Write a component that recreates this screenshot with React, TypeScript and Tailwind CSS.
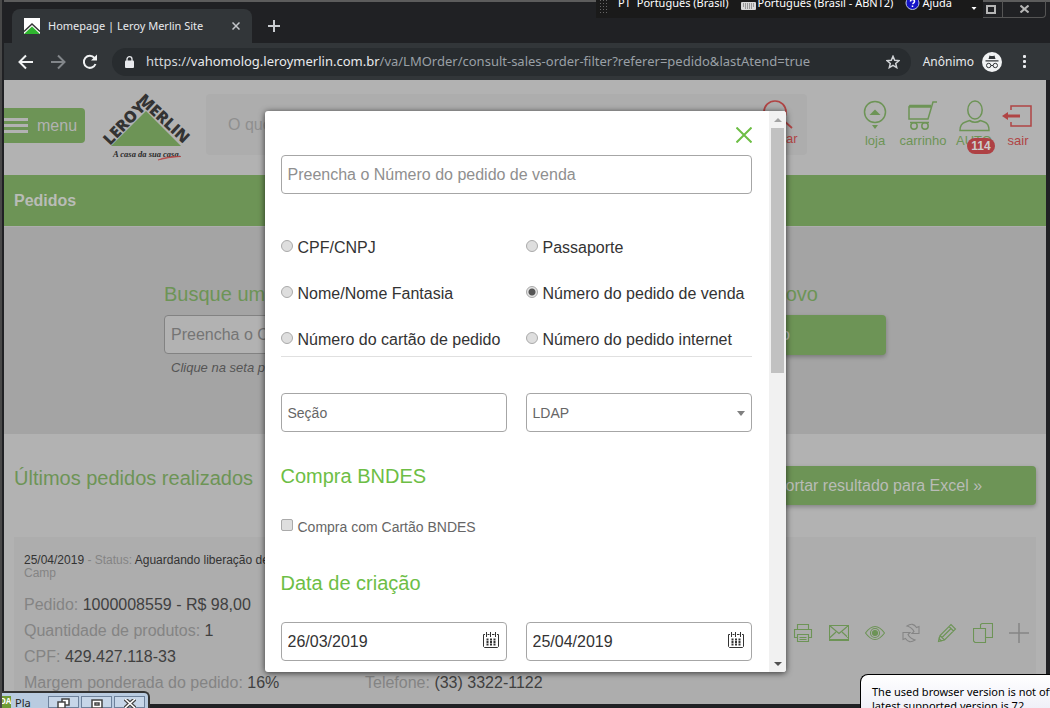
import { ReactNode, useState } from "react";

const PAGE_FONT = "font-['Liberation_Sans',Arial,sans-serif]";
const UI_FONT = "font-['Noto_Sans',sans-serif]";
const FIELD =
  "w-full rounded border border-[#a6a6a6] bg-white pl-1.5 text-[#333] placeholder:text-[#8f8f8f] outline-none";

function LanguageBar() {
  return (
    <div className="absolute -top-0.5 right-[67px] flex h-[18px] w-[387px] items-start overflow-hidden bg-[#1a1a1a] text-[11px] text-white">
      <svg width="12" height="14" className="ml-1 shrink-0" fill="#666">
        {[0, 3, 6, 9, 12].map((y) =>
          [0, 3, 6].map((x) => <rect key={`${x}-${y}`} x={x} y={y} width="1" height="1" />)
        )}
      </svg>
      <div className="flex h-1.5 flex-1 items-center whitespace-nowrap">
        <span className="ml-1.5">PT</span>
        <span className="ml-1.5">Português (Brasil)</span>
        <svg width="15" height="16" viewBox="0 0 15 16" className="mr-0.5 ml-3 shrink-0">
          <rect x="0" y="7" width="15" height="8" rx="1" fill="#d8d8d8" />
          <path d="M2 9h11M2 11h11M4 13h7" stroke="#555" strokeDasharray="1 1" />
        </svg>
        <span>Português (Brasil - ABNT2)</span>
        <svg width="15" height="16" viewBox="0 0 15 16" className="mr-0.5 ml-3 shrink-0">
          <circle cx="7.500" cy="8" r="6.500" fill="#1414c8" stroke="#b8c4e8" />
          <path d="M5.500 6.500q0-2 2-2t2 2q0 1-2 2.300M7.500 10.500v1.500" stroke="#fff" strokeWidth="1.500" fill="none" />
        </svg>
        <span>Ajuda</span>
      </div>
      <svg width="7" height="4" className="mt-[7px] mr-[5px] shrink-0">
        <path d="M0.500 0h5L3 3z" fill="#fff" />
      </svg>
    </div>
  );
}

function BrowserChrome() {
  return (
    <header className={`${UI_FONT} relative shrink-0 border-t-2 border-[#5c5c5c] text-[#e8eaed]`}>
      <div className="flex h-[41px] items-end pl-2">
        <div className="flex h-[34px] w-[240px] items-center rounded-t-lg bg-[#323639] pr-3 pl-3">
          <svg width="16" height="16" viewBox="0 0 16 16">
            <path d="M0 0h16v16H0z" fill="#fff" />
            <path d="M0 16l8-7.500 8 7.500z" fill="#2fb52f" />
            <path d="M0 13.500l8-7.500 8 7.500" stroke="#333" strokeWidth="1.400" fill="none" />
          </svg>
          <span className="ml-2 flex-1 text-[11px] whitespace-nowrap">Homepage | Leroy Merlin Site</span>
          <button aria-label="Fechar guia" className="p-0">
            <svg width="8" height="8" viewBox="0 0 8 8" stroke="#c3c6ca" strokeWidth="1.500">
              <path d="M0.500 0.500l7 7M7.500 0.500l-7 7" />
            </svg>
          </button>
        </div>
        <button aria-label="Nova guia" className="mb-[11px] ml-4">
          <svg width="12" height="12" stroke="#c9ccd0" strokeWidth="2">
            <path d="M6 0v12M0 6h12" />
          </svg>
        </button>
      </div>
      <div className="absolute -top-px right-1 flex h-[17px] rounded-b border border-t-0 border-[#555]">
        <button aria-label="Minimizar" className="w-6" />
        <button aria-label="Restaurar" className="flex w-6 items-center justify-center border-r border-[#555]">
          <svg width="10" height="9">
            <rect x="1" y="1" width="8" height="7" fill="none" stroke="#b5b5b5" strokeWidth="2" />
          </svg>
        </button>
        <button aria-label="Fechar" className="flex w-[42px] items-center justify-center">
          <svg width="9" height="8" stroke="#b5b5b5" strokeWidth="2">
            <path d="M0.500 0.500l8 7M8.500 0.500l-8 7" />
          </svg>
        </button>
      </div>
      <LanguageBar />
      <div className="flex h-[37px] items-center bg-[#323639] pr-3 pl-[14px]">
        <div className="flex w-[94px] items-center gap-4">
          <button aria-label="Voltar">
            <svg width="16" height="16" viewBox="0 0 16 16" fill="none" stroke="#f1f3f4" strokeWidth="2">
              <path d="M15 8H2M8 1.500L1.500 8 8 14.500" />
            </svg>
          </button>
          <button aria-label="Avançar">
            <svg width="16" height="16" viewBox="0 0 16 16" fill="none" stroke="#82868a" strokeWidth="2">
              <path d="M1 8h13M8 1.500L14.500 8 8 14.500" />
            </svg>
          </button>
          <button aria-label="Recarregar">
            <svg width="16" height="16" viewBox="0 0 16 16" fill="none" stroke="#f1f3f4" strokeWidth="2">
              <path d="M13.500 10A6 6 0 1 1 12.500 4" />
              <path d="M15 0.500v6H9z" fill="#f1f3f4" stroke="none" />
            </svg>
          </button>
        </div>
        <div className="flex h-7 flex-1 items-center rounded-full bg-[#282c2f] pr-[11px] pl-[13px]">
          <svg width="9" height="12" viewBox="0 0 9 12">
            <rect x="0" y="4.500" width="9" height="7.500" rx="1" fill="#e8eaed" />
            <path d="M2 5V3a2.500 2.300 0 0 1 5 0v2" stroke="#e8eaed" strokeWidth="1.300" fill="none" />
          </svg>
          <span className="ml-3 flex-1 overflow-hidden text-[13px] whitespace-nowrap text-[#9aa0a6]">
            <span className="text-[#d5d8db]">https://</span>
            <span className="text-[#e8eaed]">vahomolog.leroymerlin.com.br</span>
            /va/LMOrder/consult-sales-order-filter?referer=pedido&amp;lastAtend=true
          </span>
          <button aria-label="Favoritar">
            <svg width="14" height="14" viewBox="0 0 14 14" fill="none" stroke="#d0d3d6" strokeWidth="1.500">
              <path d="M7 1.300l1.700 3.900 4.200.4-3.200 2.800 1 4.200L7 10.400l-3.700 2.200 1-4.200L1.100 5.600l4.200-.4z" />
            </svg>
          </button>
        </div>
        <span className="mr-2 ml-3 text-xs">Anônimo</span>
        <svg width="20" height="20" viewBox="0 0 20 20">
          <circle cx="10" cy="10" r="10" fill="#f1f3f4" />
          <path d="M6.500 7l1-3.500q2.500 1 5 0l1 3.500zM3.500 8.300h13v1.200h-13z" fill="#323639" />
          <path d="M9 13.500h2M4.500 13.500a2.200 2.200 0 1 0 4.400 0 2.200 2.200 0 1 0-4.400 0M11.100 13.500a2.200 2.200 0 1 0 4.400 0 2.200 2.200 0 1 0-4.400 0" stroke="#323639" fill="none" />
        </svg>
        <button aria-label="Menu do navegador" className="ml-[21px] w-[15px]">
          <svg width="4" height="14" fill="#e8eaed">
            <rect x="0" y="0" width="3" height="3" rx="1" />
            <rect x="0" y="5" width="3" height="3" rx="1" />
            <rect x="0" y="10" width="3" height="3" rx="1" />
          </svg>
        </button>
      </div>
    </header>
  );
}

function Logo() {
  return (
    <svg width="92" height="72" viewBox="0 0 92 72" className="shrink-0" aria-label="Leroy Merlin">
      <path d="M45 21L80 56H10z" fill="#6d9456" />
      <g fill="#333" fontFamily="Open Sans" fontWeight="800" fontSize="16">
        <text transform="translate(9 56) rotate(-46)">LEROY</text>
        <text transform="translate(36 11) rotate(43)">MERLIN</text>
      </g>
      <text x="12" y="67" fill="#2b2b2b" fontFamily="Liberation Serif" fontStyle="italic" fontWeight="700" fontSize="8.500">
        A casa da sua casa.
      </text>
      <path d="M57 70q8-4 23-3.500-12 0.500-23 3.500z" fill="#b84444" stroke="#b84444" strokeWidth="0.600" />
    </svg>
  );
}

function HeaderLink({ label, width, red, children }: { label: string; width: string; red?: boolean; children: ReactNode }) {
  return (
    <a href="#" className={`${width} ${red ? "text-[#b04444]" : "text-[#6d9456]"} relative flex flex-col items-center text-[13px] leading-4`}>
      <svg width="32" height="32" viewBox="0 0 32 32" fill="none" stroke="currentColor" strokeWidth="1.500" className="mb-px">
        {children}
      </svg>
      {label}
      {label === "AUTO" && (
        <span className="absolute top-[38px] left-5 flex h-4 w-7 items-center justify-center rounded-full bg-[#ae4144] text-xs font-bold text-[#ccc]">
          114
        </span>
      )}
    </a>
  );
}

function SiteHeader() {
  return (
    <div className="flex h-[95px] items-start">
      <button className="mt-7 flex h-[35px] w-[81px] shrink-0 items-center rounded-r bg-[#6d9456] text-base text-[#b2b2b2]">
        <svg width="24" height="16" fill="#b2b2b2">
          <path d="M0 0h24v3H0zM0 6h24v3H0zM0 12h24v3H0z" />
        </svg>
        <span className="ml-[9px]">menu</span>
      </button>
      <div className="mt-2.5 ml-4">
        <Logo />
      </div>
      <form className="mt-3.5 ml-[13px] flex h-[61px] w-[601px] items-center rounded bg-[#adadad] pl-[22px]">
        <input aria-label="Busca" placeholder="O que você procura?" className="w-[500px] bg-transparent text-base outline-none placeholder:text-[#8f8f8f]" />
        <button type="button" className="ml-auto flex w-[58px] flex-col items-center pb-1 text-[13px] leading-4 text-[#b04444]">
          <svg width="32" height="32" viewBox="0 0 32 32" fill="none" stroke="currentColor" strokeWidth="1.700">
            <circle cx="13" cy="13" r="11" />
            <path d="M21 21l9 8" />
          </svg>
          buscar
        </button>
      </form>
      <nav className="mt-5 mr-[11px] ml-auto flex">
        <HeaderLink label="loja" width="w-12">
          <circle cx="16" cy="12" r="10.500" />
          <path d="M10.500 15l5.500-5.500 5.500 5.500z" fill="currentColor" stroke="none" />
          <path d="M13 25h6l-3 4z" fill="currentColor" stroke="none" />
        </HeaderLink>
        <HeaderLink label="carrinho" width="w-12">
          <path d="M30 2h-4l-5 17H2V7h22.500M2 7l1-1.500h21" />
          <circle cx="7" cy="26" r="3.200" />
          <circle cx="18" cy="26" r="3.200" />
          <path d="M3 22.500h19" />
        </HeaderLink>
        <HeaderLink label="AUTO" width="w-[54px]">
          <ellipse cx="17" cy="10" rx="7.200" ry="9" />
          <path d="M2 30.500q0-7 5.500-8.500l4-1.500q5.500 3.500 11 0l4 1.500q4.500 1.500 4.500 8.500z" />
        </HeaderLink>
        <HeaderLink label="sair" width="w-[34px]" red>
          <path d="M9 10V6h20v20H9v-4" />
          <path d="M18 16H4" strokeWidth="3" />
          <path d="M0 16l6-4v8z" fill="currentColor" stroke="none" />
        </HeaderLink>
      </nav>
    </div>
  );
}

const ACTIONS: { name: string; gray?: boolean; draw: ReactNode }[] = [
  { name: "Imprimir", draw: <path d="M4.500 6.500V1.500h11v5M4 14.500H1.500v-8h17v8H16M4.500 11.500h11v7h-11zM6.500 14.500h7M6.500 16.500h7" /> },
  { name: "Enviar e-mail", draw: <path d="M0.500 2.500h19v15H0.500zM0.500 2.500l9.500 8 9.500-8M0.500 15l6.500-6M19.500 15L13 9M0.500 16.500h19" /> },
  {
    name: "Visualizar",
    draw: (
      <>
        <path d="M0.500 10q9.500-13 19 0-9.500 13-19 0z" />
        <circle cx="10" cy="10" r="4.500" />
        <circle cx="10" cy="10" r="2.500" fill="currentColor" />
      </>
    ),
  },
  { name: "Atualizar", gray: true, draw: <path d="M6 3q6-4 9.500 1.500l2.500-1v7h-7l2-2Q11 4.500 6 3zM14 17q-6 4-9.500-1.500l-2.500 1v-7h7l-2 2q2 4 7 5.500z" /> },
  { name: "Editar", draw: <path d="M1.500 18.500l1.500-6L14 1.500l4.500 4.500L7.500 17zM3 12.500l4.500 4.500M12 3.500L16.500 8M5 14.500l9-9M1.500 18.500l3-0.500-2.500-2.500z" /> },
  { name: "Duplicar", draw: <path d="M0.500 5.500h12v14H2l-1.500-1.500zM7.500 5V1.500L9 0.500h10.500v14h-6.500" /> },
  { name: "Expandir", gray: true, draw: <path d="M10 0v20M0 10h20" strokeWidth="1.500" /> },
];

function Info({ label, value }: { label: string; value: string }) {
  return (
    <div className="text-[#848484]">
      {label} <span className="text-[#404040]">{value}</span>
    </div>
  );
}

function OrdersPage() {
  return (
    <>
      <h1 className="flex h-[51px] items-center bg-[#6d9456] pl-2.5 text-base font-bold text-[#b9bcb7]">Pedidos</h1>
      <section className="h-[208px] bg-[#a4a4a4] pt-[55px] shadow-[inset_0_1px_#adadad]">
        <div className="mx-auto grid w-[722px] grid-cols-2 gap-5">
          <div>
            <h2 className="text-xl leading-[26px] text-[#6d9456]">Busque um pedido</h2>
            <input
              aria-label="CPF do cliente"
              placeholder="Preencha o CPF/CNPJ"
              className="mt-2 h-[39px] w-full rounded border border-[#828282] bg-[#b2b2b2] pt-px pl-1.5 text-base placeholder:text-[#757575]"
            />
            <p className="mt-[5px] pl-[7px] text-[13px] leading-[18px] text-[#555] italic">Clique na seta para mais opções</p>
          </div>
          <div>
            <h2 className="pr-[68px] text-right text-xl leading-[26px] text-[#6d9456]">Ou crie um novo</h2>
            <button className="mt-2 h-10 w-full rounded bg-[#6d9456] pr-24 text-right text-base text-[#b9bcb7] shadow-[0_2px_4px_rgba(0,0,0,0.25)]">
              Criar novo pedido
            </button>
          </div>
        </div>
      </section>
      <section className="px-2.5 pt-8">
        <div className="flex justify-between">
          <h2 className="pt-px text-xl leading-[22px] text-[#6d9456]">Últimos pedidos realizados</h2>
          <button className="h-[39px] w-[332px] rounded bg-[#6d9456] pt-px text-base text-[#b9bcb7] shadow-[0_2px_4px_rgba(0,0,0,0.25)]">
            Exportar resultado para Excel »
          </button>
        </div>
        <article className="mt-8 flex h-[180px] justify-between bg-[#adadad] pt-[17px] pl-2.5">
          <div className="text-base leading-[26px] whitespace-nowrap">
            <p className="pb-3 text-xs leading-[13px] text-[#848484]">
              <span className="text-[#333]">25/04/2019</span> - Status: <span className="text-[#333]">Aguardando liberação de</span>
              <br />
              Camp
            </p>
            <Info label="Pedido:" value="1000008559 - R$ 98,00" />
            <Info label="Quantidade de produtos:" value="1" />
            <Info label="CPF:" value="429.427.118-33" />
            <div className="grid grid-cols-[341px_auto]">
              <Info label="Margem ponderada do pedido:" value="16%" />
              <Info label="Telefone:" value="(33) 3322-1122" />
            </div>
          </div>
          <div className="mt-[69px] mr-[7px] flex h-5 gap-4">
            {ACTIONS.map((a) => (
              <button key={a.name} aria-label={a.name} className={a.gray ? "text-[#858585]" : "text-[#6d9456]"}>
                <svg width="20" height="20" viewBox="0 0 20 20" fill="none" stroke="currentColor" strokeWidth="1.100">
                  {a.draw}
                </svg>
              </button>
            ))}
          </div>
        </article>
      </section>
    </>
  );
}

const SEARCH_TYPES = [
  "CPF/CNPJ",
  "Passaporte",
  "Nome/Nome Fantasia",
  "Número do pedido de venda",
  "Número do cartão de pedido",
  "Número do pedido internet",
];

function DateField({ label, initial }: { label: string; initial: string }) {
  return (
    <div className="relative">
      <input aria-label={label} defaultValue={initial} className={`${FIELD} h-[39px] pt-px text-base`} />
      <svg width="16" height="16" viewBox="0 0 16 16" className="pointer-events-none absolute top-2.5 right-2" fill="none" stroke="#333">
        <path d="M2 2.500H0.500v12l1 1h13l1-1v-12H14M4.500 2.500h2M9 2.500h2.500M3.500 0v5M7.500 0v5M12.500 0v5" />
        <path d="M3.500 7.500h9M3.500 10h9M3.500 12.500h9" strokeWidth="2" strokeDasharray="2 1.500" />
      </svg>
    </div>
  );
}

function FilterDialog() {
  const [type, setType] = useState("Número do pedido de venda");
  return (
    <div role="dialog" aria-label="Filtros" className="flex w-[521px] overflow-hidden rounded-[3px] bg-white shadow-[0_1px_6px_rgba(0,0,0,0.7)]">
      <form className="flex-1 pt-4 pr-[17px] pb-[11px] pl-4">
        <div className="flex h-7 justify-end">
          <button type="button" aria-label="Fechar" className="h-4">
            <svg width="16" height="16" stroke="#6dbe45" strokeWidth="2">
              <path d="M0.500 0.500l15 15M15.500 0.500l-15 15" />
            </svg>
          </button>
        </div>
        <input aria-label="Número do pedido de venda" placeholder="Preencha o Número do pedido de venda" className={`${FIELD} h-[39px] pt-px text-base`} />
        <fieldset className="mt-[41px] grid grid-cols-2 gap-x-[19px] gap-y-5 border-b border-[#e0e0e0] pb-[3px]">
          {SEARCH_TYPES.map((t) => (
            <label key={t} className="flex h-[26px] items-center text-base whitespace-nowrap text-[#333]">
              <input
                type="radio"
                name="tipo"
                checked={type === t}
                onChange={() => setType(t)}
                className="mr-[5px] mb-1 size-3 appearance-none rounded-full border border-[#aaa] bg-[#dedede] checked:bg-[radial-gradient(circle,#555_0_3px,#e4e4e4_4px)]"
              />
              {t}
            </label>
          ))}
        </fieldset>
        <div className="mt-9 grid grid-cols-2 gap-[19px] text-sm">
          <input aria-label="Seção" placeholder="Seção" className={`${FIELD} h-[39px] placeholder:text-[#666]`} />
          <div className="relative">
            <select aria-label="LDAP" className={`${FIELD} h-[39px] appearance-none text-[#666]`}>
              <option>LDAP</option>
            </select>
            <svg width="8" height="5" className="pointer-events-none absolute top-[18px] right-[7px]">
              <path d="M0 0h8L4 5z" fill="#808080" />
            </svg>
          </div>
        </div>
        <h2 className="mt-8 text-xl leading-6 text-[#6dbe45]">Compra BNDES</h2>
        <label className="mt-[27px] flex h-6 items-center text-sm text-[#666]">
          <input type="checkbox" className="mr-[5px] mb-1 size-3 appearance-none rounded-xs border border-[#aaa] bg-[#dedede] checked:bg-[#555]" />
          Compra com Cartão BNDES
        </label>
        <h2 className="mt-8 text-xl leading-6 text-[#6dbe45]">Data de criação</h2>
        <div className="mt-[27px] grid grid-cols-2 gap-[19px]">
          <DateField label="Data inicial" initial="26/03/2019" />
          <DateField label="Data final" initial="25/04/2019" />
        </div>
      </form>
      <div className="flex w-[17px] flex-col items-center bg-[#f1f1f1]">
        <svg width="17" height="17">
          <path d="M5 11h8L9 7z" fill="#a3a3a3" />
        </svg>
        <div className="h-[245px] w-[13px] bg-[#c1c1c1]" />
        <svg width="17" height="17" className="mt-auto">
          <path d="M5 7h8l-4 4z" fill="#505050" />
        </svg>
      </div>
    </div>
  );
}

function PlayerWindow() {
  return (
    <div className={`${UI_FONT} absolute bottom-0 -left-0.5 flex h-[17px] w-[150px] overflow-hidden rounded-tr-md border-t-2 border-r-2 border-[#333] bg-[#b9cbe0] text-xs`}>
      <span className="mt-[3px] h-3 w-[11px] shrink-0 overflow-hidden bg-[#6f9c34] text-[8px] leading-[9px] font-bold text-white">DA</span>
      <span className="ml-1 w-[33px] pt-1 text-[11px] leading-3 text-[#222]">Pla</span>
      <div className="flex gap-0.5 pt-[3px]">
        <button aria-label="Restaurar janela" className="flex h-3 w-[31px] justify-center border border-[#6e829c] bg-[#c7d6e8] pt-px">
          <svg width="13" height="11" fill="#fff" stroke="#444" strokeWidth="1.500">
            <rect x="5" y="1" width="7" height="6" />
            <rect x="1" y="4" width="7" height="6" />
          </svg>
        </button>
        <button aria-label="Maximizar janela" className="flex h-3 w-[31px] justify-center border border-[#6e829c] bg-[#c7d6e8] pt-0.5">
          <svg width="12" height="9" fill="#fff" stroke="#444" strokeWidth="1.500">
            <path d="M1 1h10v8H1zM4 4h4v2H4z" />
          </svg>
        </button>
        <button aria-label="Fechar janela" className="flex h-3 w-[31px] justify-center border border-[#6e829c] bg-[#c7d6e8] pt-0.5">
          <svg width="12" height="9" fill="none">
            <path d="M1 0l10 9M11 0L1 9" stroke="#444" strokeWidth="4" />
            <path d="M1 0l10 9M11 0L1 9" stroke="#fff" strokeWidth="1.500" />
          </svg>
        </button>
      </div>
    </div>
  );
}

function VersionNotice() {
  return (
    <div role="status" className={`${UI_FONT} absolute right-0 bottom-0 h-[34px] w-[190px] overflow-hidden rounded-tl-lg border-t border-l border-black bg-linear-to-b from-white to-[#f0f0f8] pt-2.5 pl-[11px] text-[11px] leading-[14px] whitespace-nowrap text-black`}>
      The used browser version is not officially
      <br />
      latest supported version is 72
    </div>
  );
}

export default function App() {
  return (
    <div className="relative flex h-screen flex-col overflow-hidden border-l-2 border-[#484848] bg-[#202124] pl-0.5">
      <BrowserChrome />
      <main className={`${PAGE_FONT} relative mr-1 mb-1 flex-1 overflow-hidden bg-[#b2b2b2]`}>
        <SiteHeader />
        <OrdersPage />
        <div className="absolute inset-0 flex items-start justify-center pt-[31px]">
          <FilterDialog />
        </div>
      </main>
      <PlayerWindow />
      <VersionNotice />
    </div>
  );
}
